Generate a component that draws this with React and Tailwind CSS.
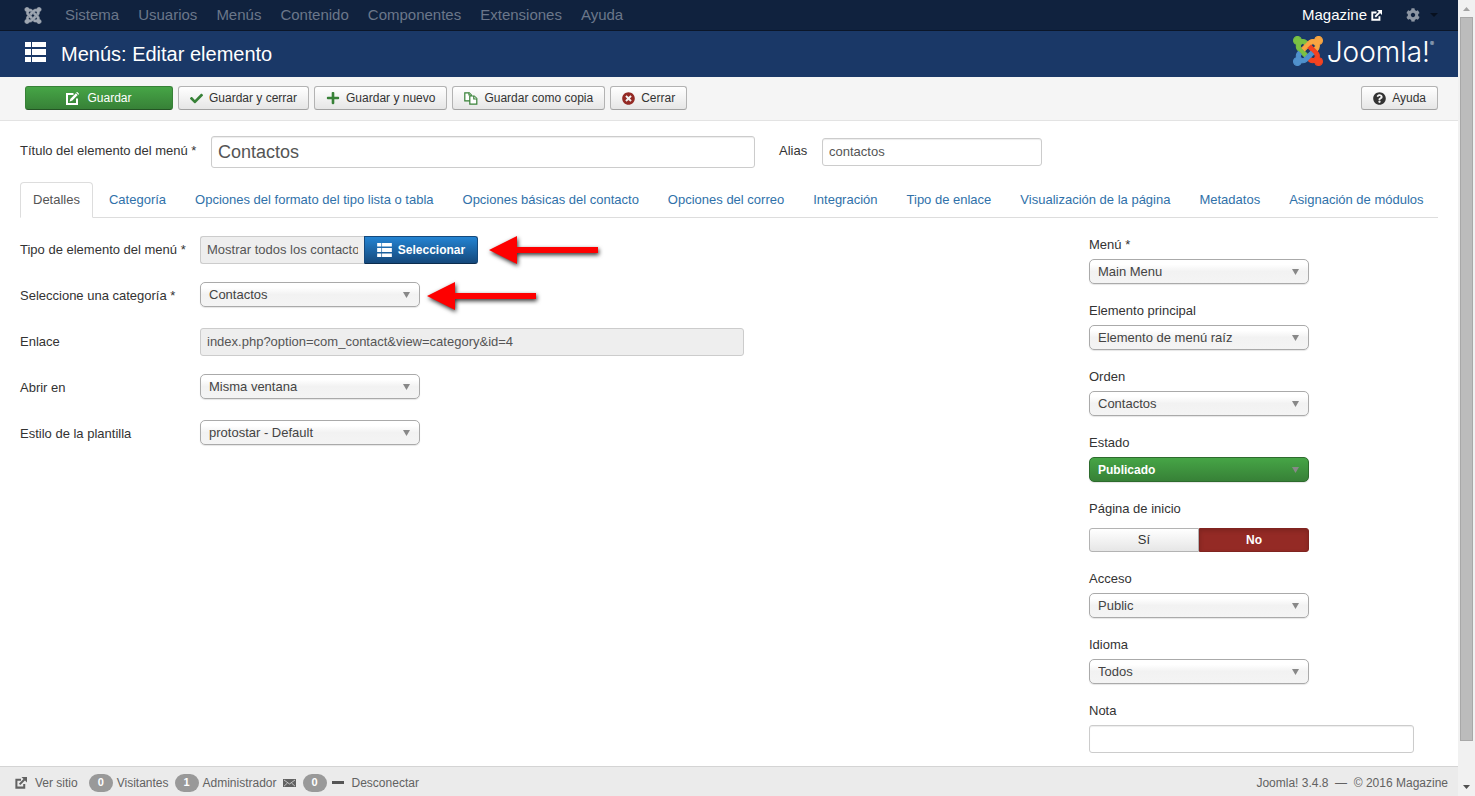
import { useState } from 'react';
import { FaCheck, FaCog, FaPlus, FaQuestionCircle, FaTimesCircle } from 'react-icons/fa';

const JOOMLA_PARTS = [
  { color: '#7ac143', d: 'M.6 92.1C.6 58.8 27.4 32 60.4 32c30 0 54.5 21.9 59.2 50.2 32.6-7.6 67.1.6 96.5 30l-44.3 44.3c-20.5-20.5-42.6-16.3-55.4-3.5-14.3 14.3-14.3 37.9 0 52.2l99.5 99.5-44 44.3c-87.7-87.2-49.7-49.7-99.8-99.7-26.8-26.5-35-64.8-24.8-98.9C20.4 144.6.6 120.7.6 92.1z' },
  { color: '#f9a541', d: 'M130.1 208.5l44.3 44.3c10-10 89.7-89.7 99.7-99.8 14.3-14.3 37.6-14.3 51.9 0 12.8 12.8 17 35-3.5 55.4l44 44.3c31.2-31.2 38.5-67.6 28.9-101.2 29.2-4.1 51.9-29.2 51.9-59.5 0-33.2-26.8-60.1-59.8-60.1-30.3 0-55.4 22.5-59.5 51.6-33.8-9.9-71.7-1.5-98.3 25.1-18.3 19.1-71.1 71.5-99.6 99.9z' },
  { color: '#f44321', d: 'M396.4 360.7c8.2-32.7-.9-68.5-26.3-93.9-11.8-12.2 5 4.7-99.5-99.7l-44.3 44.3 99.7 99.7c14.3 14.3 14.3 37.6 0 51.9-12.8 12.8-35 17-55.4-3.5l-44 44.3c27.6 30.2 68 38.8 102.7 28 5.5 27.4 29.7 48.1 58.9 48.1 33 0 59.8-26.8 59.8-60.1 0-30.2-22.5-55-51.6-59.1z' },
  { color: '#5091cd', d: 'M312.1 307.6l-44-44.3c-87 86.4-50.4 50.4-99.7 99.8-14.3 14.3-37.6 14.3-51.9 0-13.1-13.4-16.9-35.3 3.2-55.4l-44-44.3c-30.2 30.2-38 65.2-29.5 98.3-26.7 6-46.2 29.9-46.2 58.2C0 453.2 26.8 480 59.8 480c28.6 0 52.5-19.8 58.6-46.7 32.7 8.2 68.5-.6 94.2-26 32.1-32 12.2-12.4 99.5-99.7z' },
];

const JoomlaMark = ({ mono, className }) => (
  <svg viewBox="-8 24 464 464" className={className} aria-hidden="true">
    {JOOMLA_PARTS.map(part => (
      <path
        key={part.color}
        d={part.d}
        fill={mono ? 'currentColor' : part.color}
        stroke={mono ? 'currentColor' : part.color}
        strokeWidth="16"
      />
    ))}
  </svg>
);

const ListIcon = ({ className }) => (
  <svg viewBox="0 0 21 20" className={className} fill="currentColor" aria-hidden="true">
    <path d="M0 0h6v5H0zM7 0h14v5H7zM0 7h6v6H0zM7 7h14v6H7zM0 15h6v5H0zM7 15h14v5H7z" />
  </svg>
);

const EditIcon = ({ className }) => (
  <svg viewBox="0 0 13 13" className={className} fill="none" stroke="currentColor" strokeWidth="2" aria-hidden="true">
    <path d="M7.5 2H1v10h10V6.5" />
    <path d="M5.2 7.8l5.6-5.6" strokeWidth="2.6" />
    <path d="M3.6 9.4l.7-2.6 1.9 1.9z" fill="currentColor" stroke="none" />
    <path d="M10.6.2L12.8 2.4" strokeWidth="1.2" />
  </svg>
);

const ExternalIcon = ({ className }) => (
  <svg viewBox="0 0 13 13" className={className} fill="none" stroke="currentColor" strokeWidth="2.2" aria-hidden="true">
    <path d="M6.5 3H1.5v8.500h8.500V7.500" />
    <path d="M5 8l5.500-5.500" />
    <path d="M7 0H13v6z" fill="currentColor" stroke="none" />
  </svg>
);

const CopyIcon = ({ className }) => (
  <svg viewBox="0 0 14 13" className={className} fill="#fff" stroke="currentColor" strokeWidth="1.2" aria-hidden="true">
    <path d="M.8.8h4.4l2 2v6H.8z" />
    <path d="M5 .8V3h2.2" />
    <path d="M5.8 4h4.4l2.6 2.6v5.6h-7z" />
    <path d="M9.8 4v3h3" />
  </svg>
);

const MailIcon = ({ className }) => (
  <svg viewBox="0 0 13 8" className={className} aria-hidden="true">
    <path d="M0 0h13v8H0z" fill="currentColor" />
    <path d="M1 1l5.500 4L12 1M1 7.200L4.500 4M12 7.200L8.500 4" fill="none" stroke="#ebebeb" strokeWidth=".7" />
  </svg>
);

const Arrow = ({ className }) => (
  <svg viewBox="0 0 118 40" className={`h-10 w-[118px] shrink-0 overflow-visible ${className}`} aria-hidden="true">
    <path
      d="M1 20L29 6v11h81v6H29v11z"
      fill="#fe0000"
      className="drop-shadow-[1px_2px_2px_rgba(0,0,0,0.8)]"
    />
  </svg>
);

const menus = ['Sistema', 'Usuarios', 'Menús', 'Contenido', 'Componentes', 'Extensiones', 'Ayuda'];

const tabs = [
  'Detalles', 'Categoría', 'Opciones del formato del tipo lista o tabla', 'Opciones básicas del contacto',
  'Opciones del correo', 'Integración', 'Tipo de enlace', 'Visualización de la página', 'Metadatos',
  'Asignación de módulos',
];

const ToolbarButton = ({ children, className = '' }) => (
  <button
    type="button"
    className={`flex h-6 items-center rounded-[3px] border border-[#b3b3b3] border-b-[#a2a2a2] bg-linear-to-b from-white to-[#e6e6e6] px-[11px] text-xs text-[#333] ${className}`}
  >
    {children}
  </button>
);

const Select = ({ id, value, published }) => (
  <div className="relative w-[220px]">
    <select
      id={id}
      className={`block h-[25px] w-full appearance-none rounded-[5px] border px-2 shadow-[0_1px_1px_rgba(0,0,0,0.1)] ${
        published
          ? 'border-[#2d6b2d] bg-linear-to-b from-[#46a546] to-[#378137] text-xs font-bold text-white'
          : 'border-[#aaa] bg-linear-to-b from-white from-20% via-[#f2f2f2] via-50% to-[#f4f4f4] text-[13px] text-[#444]'
      }`}
    >
      <option>{value}</option>
    </select>
    <svg viewBox="0 0 8 6" className="pointer-events-none absolute top-[10px] right-[10px] h-[6px] w-[7px]" preserveAspectRatio="none" fill="#888" aria-hidden="true">
      <path d="M0 0h8L4 6z" />
    </svg>
  </div>
);

const FieldRow = ({ id, label, children }) => (
  <div className="flex h-7">
    <label htmlFor={id} className="w-[180px] shrink-0 pt-[5px]">{label}</label>
    <div className="flex">{children}</div>
  </div>
);

const SideField = ({ id, label, children }) => (
  <div>
    <label htmlFor={id} className="mb-[5px] block">{label}</label>
    {children}
  </div>
);

const Badge = ({ children }) => (
  <span className="flex h-[18px] w-6 items-center justify-center rounded-full bg-[#999] text-[11px] font-bold text-white">
    {children}
  </span>
);

const TopNav = () => (
  <nav className="flex h-[31px] shrink-0 items-center justify-between border-b border-[#0b1629] bg-[#10223e] pr-5 pl-6 text-[15px] text-[#6b778a]">
    <div className="flex items-center gap-px">
      <a href="#" aria-label="Joomla" className="mr-[13px] text-[#9fa7b2]"><JoomlaMark mono className="h-[17px] w-[18px]" /></a>
      {menus.map(menu => (
        <a key={menu} href="#" className="px-[9px]">{menu}</a>
      ))}
    </div>
    <div className="flex items-center">
      <a href="#" className="flex items-center gap-1 text-white">
        Magazine
        <ExternalIcon className="size-[11px]" />
      </a>
      <button type="button" aria-label="Opciones" className="ml-6 flex items-center gap-[10px]">
        <FaCog size={14} className="text-[#8d96a3]" />
        <svg viewBox="0 0 8 4" className="h-1 w-2" aria-hidden="true"><path d="M0 0h8L4 4z" fill="#07101f" /></svg>
      </button>
    </div>
  </nav>
);

const Header = () => (
  <header className="flex h-[46px] shrink-0 items-center justify-between bg-[#1a3867] pr-6 pl-[25px] text-white">
    <h1 className="flex items-center gap-[15px] text-[20px]">
      <ListIcon className="mb-1 h-5 w-[21px]" />
      Menús: Editar elemento
    </h1>
    <a href="#" className="flex items-center gap-1 pb-[6px]">
      <JoomlaMark className="size-[30px]" />
      <span className="flex pt-[2px] font-[Inter,sans-serif] text-[28px] leading-7 font-light">
        Joomla!
        <sup className="top-0 text-[6px] leading-3">®</sup>
      </span>
    </a>
  </header>
);

const Toolbar = () => (
  <div className="flex h-[44px] shrink-0 items-start justify-between border-b border-[#e3e3e3] bg-[#f5f5f5] px-5 pt-[9px] pl-[25px]">
    <div className="flex gap-[5px]">
      <button
        type="button"
        className="flex h-6 w-[148px] items-center justify-center gap-2 rounded-[3px] border border-[#378137] border-b-[#245524] bg-linear-to-b from-[#46a546] to-[#378137] text-xs text-white"
      >
        <EditIcon className="size-[13px]" />
        Guardar
      </button>
      <ToolbarButton><FaCheck size={13} className="mr-[6px] text-[#378137]" />Guardar y cerrar</ToolbarButton>
      <ToolbarButton><FaPlus size={14} className="mr-[6px] text-[#378137]" />Guardar y nuevo</ToolbarButton>
      <ToolbarButton><CopyIcon className="mr-[6px] h-[13px] w-[14px] text-[#378137]" />Guardar como copia</ToolbarButton>
      <ToolbarButton><FaTimesCircle size={13} className="mr-[6px] text-[#942a25]" />Cerrar</ToolbarButton>
    </div>
    <ToolbarButton><FaQuestionCircle size={13} className="mr-[6px]" />Ayuda</ToolbarButton>
  </div>
);

const StatusBar = () => (
  <footer className="flex h-[30px] shrink-0 items-center justify-between border-t border-[#d4d4d4] bg-[#ebebeb] pt-[2px] pr-[10px] pl-[15px] text-xs text-[#626262]">
    <div className="flex items-center">
      <a href="#" className="mr-[11px] flex items-center gap-2"><ExternalIcon className="size-3" />Ver sitio</a>
      <div className="mr-[6px] flex items-center gap-1"><Badge>0</Badge>Visitantes</div>
      <div className="mr-[6px] flex items-center gap-1"><Badge>1</Badge>Administrador</div>
      <a href="#" aria-label="Mensajes" className="mr-[5px] flex items-center gap-[7px]">
        <MailIcon className="h-2 w-[13px]" />
        <Badge>0</Badge>
      </a>
      <a href="#" className="flex items-center gap-2">
        <span className="h-[3px] w-3 bg-[#555]" />
        Desconectar
      </a>
    </div>
    <span>Joomla! 3.4.8 &nbsp;—&nbsp; © 2016 Magazine</span>
  </footer>
);

const Scrollbar = () => (
  <div className="flex w-[17px] shrink-0 flex-col items-center bg-[#f1f1f1] pb-[7px]" aria-hidden="true">
    <svg viewBox="0 0 7 4" className="mt-[7px] mb-[6px] h-1 w-[7px]"><path d="M3.500 0L7 4H0z" fill="#a3a3a3" /></svg>
    <div className="mb-11 w-[13px] flex-1 border border-[#a8a8a8] bg-[#bcbcbc]" />
    <svg viewBox="0 0 7 4" className="h-1 w-[7px]"><path d="M0 0h7L3.500 4z" fill="#505050" /></svg>
  </div>
);

const App = () => {
  const [activeTab, setActiveTab] = useState('Detalles');
  const [home, setHome] = useState(false);

  return (
    <div className="flex h-screen bg-white font-['Liberation_Sans',Arial,sans-serif] text-[13px] leading-[18px] text-[#333]">
      <div className="flex min-w-0 flex-1 flex-col">
        <TopNav />
        <Header />
        <Toolbar />

        <main className="min-h-0 flex-1 overflow-hidden px-5 pt-[15px]">
          {/* Title and alias */}
          <div className="flex h-8 items-center">
            <label htmlFor="title" className="w-[191px] pb-[2px]">Título del elemento del menú *</label>
            <input
              id="title"
              defaultValue="Contactos"
              className="h-8 w-[544px] rounded-[3px] border border-[#ccc] px-[6px] text-[18px] text-[#555] shadow-[inset_0_1px_1px_rgba(0,0,0,0.075)]"
            />
            <label htmlFor="alias" className="ml-6 w-[43px] pb-[2px]">Alias</label>
            <input
              id="alias"
              defaultValue="contactos"
              className="h-7 w-[220px] rounded-[3px] border border-[#ccc] px-[6px] pb-[2px] text-[#555] shadow-[inset_0_1px_1px_rgba(0,0,0,0.075)]"
            />
          </div>

          {/* Tabs */}
          <div role="tablist" className="mt-[14px] flex gap-[3px] border-b border-[#ddd]">
            {tabs.map(tab => (
              <button
                key={tab}
                type="button"
                role="tab"
                aria-selected={tab === activeTab}
                onClick={() => setActiveTab(tab)}
                className={`-mb-px h-9 rounded-t-[4px] border px-3 whitespace-nowrap ${
                  tab === activeTab
                    ? 'border-[#ddd] border-b-white bg-white text-[#555]'
                    : 'border-transparent text-[#3071a9]'
                }`}
              >
                {tab}
              </button>
            ))}
          </div>

          <div className="flex justify-between pt-[18px]">
            <div className="flex flex-col gap-[18px]">
              <FieldRow id="type" label="Tipo de elemento del menú *">
                <input
                  id="type"
                  readOnly
                  value="Mostrar todos los contactos de una categoría"
                  className="h-7 w-[164px] rounded-l-[3px] border border-r-0 border-[#ccc] bg-[#eee] px-[6px] pb-[2px] text-[#555]"
                />
                <button
                  type="button"
                  className="flex h-7 w-[114px] items-center justify-center gap-[6px] rounded-r-[3px] border border-[#15497c] border-b-[#0b2c4d] bg-linear-to-b from-[#2384d3] to-[#15497c] text-xs font-bold text-white"
                >
                  <ListIcon className="h-[14px] w-[15px]" />
                  Seleccionar
                </button>
                <Arrow className="-my-[6px] ml-[10px]" />
              </FieldRow>
              <FieldRow id="category" label="Seleccione una categoría *">
                <Select id="category" value="Contactos" />
                <Arrow className="-my-[6px] ml-[6px]" />
              </FieldRow>
              <FieldRow id="link" label="Enlace">
                <input
                  id="link"
                  readOnly
                  value="index.php?option=com_contact&view=category&id=4"
                  className="h-7 w-[544px] rounded-[3px] border border-[#ccc] bg-[#eee] px-[6px] pb-[2px] text-[#555]"
                />
              </FieldRow>
              <FieldRow id="target" label="Abrir en">
                <Select id="target" value="Misma ventana" />
              </FieldRow>
              <FieldRow id="style" label="Estilo de la plantilla">
                <Select id="style" value="protostar - Default" />
              </FieldRow>
            </div>

            <div className="flex w-[349px] shrink-0 flex-col gap-[18px]">
              <SideField id="menu" label="Menú *"><Select id="menu" value="Main Menu" /></SideField>
              <SideField id="parent" label="Elemento principal"><Select id="parent" value="Elemento de menú raíz" /></SideField>
              <SideField id="order" label="Orden"><Select id="order" value="Contactos" /></SideField>
              <SideField id="state" label="Estado"><Select id="state" value="Publicado" published /></SideField>
              <div>
                <span id="home-label" className="mb-[10px] block">Página de inicio</span>
                <div role="group" aria-labelledby="home-label" className="flex w-[220px]">
                  <button
                    type="button"
                    onClick={() => setHome(true)}
                    className={`h-6 flex-1 rounded-l-[3px] border ${
                      home
                        ? 'border-[#378137] bg-[#46a546] font-bold text-white'
                        : 'border-[#b3b3b3] bg-linear-to-b from-white to-[#e6e6e6]'
                    }`}
                  >
                    Sí
                  </button>
                  <button
                    type="button"
                    onClick={() => setHome(false)}
                    className={`h-6 flex-1 rounded-r-[3px] border ${
                      home
                        ? 'border-[#b3b3b3] bg-linear-to-b from-white to-[#e6e6e6]'
                        : 'border-[#802420] bg-[#942a25] text-xs font-bold text-white shadow-[inset_0_2px_4px_rgba(0,0,0,0.15)]'
                    }`}
                  >
                    No
                  </button>
                </div>
              </div>
              <SideField id="access" label="Acceso"><Select id="access" value="Public" /></SideField>
              <SideField id="language" label="Idioma"><Select id="language" value="Todos" /></SideField>
              <SideField id="note" label="Nota">
                <input
                  id="note"
                  className="block h-7 w-[325px] rounded-[3px] border border-[#ccc] px-[6px] shadow-[inset_0_1px_1px_rgba(0,0,0,0.075)]"
                />
              </SideField>
            </div>
          </div>
        </main>

        <StatusBar />
      </div>
      <Scrollbar />
    </div>
  );
};

export default App;
